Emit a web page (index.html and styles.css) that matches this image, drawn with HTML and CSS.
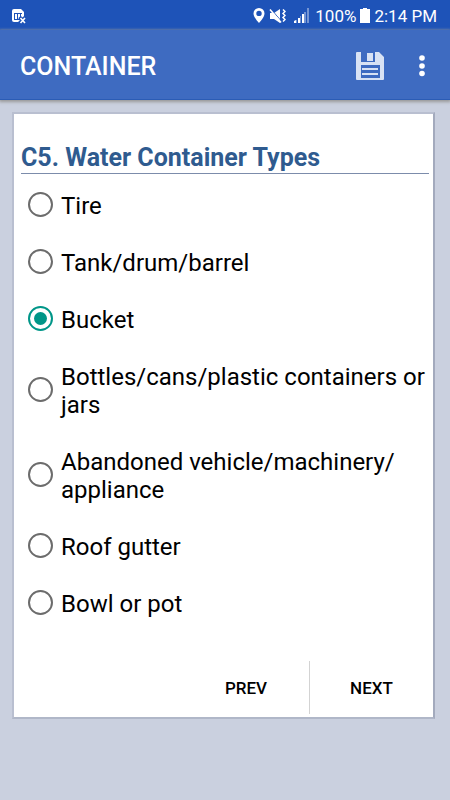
FILE: index.html
```
<!DOCTYPE html>
<html lang="en">
	<head>
		<meta charset="utf-8">
		<meta name="viewport" content="width=device-width, initial-scale=1">
		<title>Container</title>
		<link rel="stylesheet" href="styles.css">
	</head>
	<body>
		<div class="status_bar">
			<svg class="status_notice" width="15" height="16" viewBox="0 0 15 16">
				<path d="M2 1h7l3 3v10H2q-2 0-2-2V3q0-2 2-2z" fill="#fff"/>
				<path d="M2 5.500h8M2.500 5v7M2 11.500h6M5.500 6v5M8.500 6v3" fill="none" stroke="#1e53b8" stroke-width="1"/>
				<path d="M7.500 9l6 6M13.500 9l-6 6" stroke="#1e53b8" stroke-width="3.500"/>
				<path d="M8.500 10l4.500 5M13 10l-4.500 5" stroke="#fff" stroke-width="1.600"/>
			</svg>
			<div class="status_right">
				<svg width="12" height="16" viewBox="0 0 12 16">
					<path d="M6 0a5.500 5.500 0 0 0-5.500 5.500C.5 9.500 6 15 6 15s5.500-5.500 5.500-9.500A5.500 5.500 0 0 0 6 0zm0 2.700a2.700 2.700 0 1 1 0 5.400 2.700 2.700 0 0 1 0-5.400z" fill="#fff" fill-rule="evenodd"/>
				</svg>
				<svg width="17" height="16" viewBox="0 0 17 16">
					<path d="M1 5h4l6-4v14l-6-4H1z" fill="#fff"/>
					<path d="M2 1l11 13" stroke="#1e53b8" stroke-width="1"/>
					<path d="M1 1.500l11 13" stroke="#fff" stroke-width="1.600"/>
					<path d="M14 1.500l2 2-2 2 2 2-2 2 2 2-2 2" fill="none" stroke="#fff" stroke-width="1.500"/>
				</svg>
				<svg class="status_signal" width="16" height="16" viewBox="0 0 16 16">
					<path d="M0 15v-2l2-1v3zM4 15v-5h2v5zM8 15V6h2v9z" fill="#fff"/>
					<path d="M2 15v-3h1v3zM6 15V8h1v7zM10 15V4h2v11zM13 15V0h2v15z" fill="#7595d3"/>
				</svg>
				<span>100%</span>
				<svg width="10" height="16" viewBox="0 0 10 16">
					<path d="M3 0h4v1h3v14H0V1h3z" fill="#fff"/>
				</svg>
				<span>2:14 PM</span>
			</div>
		</div>

		<header class="app_bar">
			<h1>CONTAINER</h1>
			<button type="button" class="icon_button" aria-label="Save">
				<svg width="28" height="28" viewBox="0 0 28 28">
					<path d="M1 0h4v10h14V0h4l5 5v22q0 1-1 1H1q-1 0-1-1V1q0-1 1-1z" fill="#d8e2f4"/>
					<path d="M11 1h6v8h-6z" fill="#d8e2f4"/>
					<path d="M5 13h19v13H5z" fill="#3e6bc1"/>
					<path d="M6 17h16M6 22h16" stroke="#d8e2f4" stroke-width="2"/>
				</svg>
			</button>
			<button type="button" class="icon_button menu_button" aria-label="More options">
				<svg width="6" height="22" viewBox="0 0 6 22">
					<circle cx="3" cy="3" r="2.800" fill="#fff"/>
					<circle cx="3" cy="11" r="2.800" fill="#fff"/>
					<circle cx="3" cy="18.500" r="2.800" fill="#fff"/>
				</svg>
			</button>
		</header>

		<form class="card">
			<fieldset class="question">
				<legend>C5. Water Container Types</legend>
				<label class="option"><input type="radio" name="container_type" value="tire"><span>Tire</span></label>
				<label class="option"><input type="radio" name="container_type" value="tank"><span>Tank/drum/barrel</span></label>
				<label class="option"><input type="radio" name="container_type" value="bucket" checked><span>Bucket</span></label>
				<label class="option"><input type="radio" name="container_type" value="bottles"><span>Bottles/cans/plastic containers or jars</span></label>
				<label class="option"><input type="radio" name="container_type" value="vehicle"><span>Abandoned vehicle/machinery/<wbr>appliance</span></label>
				<label class="option"><input type="radio" name="container_type" value="gutter"><span>Roof gutter</span></label>
				<label class="option"><input type="radio" name="container_type" value="bowl"><span>Bowl or pot</span></label>
			</fieldset>
			<div class="card_buttons">
				<button type="button">PREV</button>
				<button type="button">NEXT</button>
			</div>
		</form>
	</body>
</html>
```

FILE: styles.css
```
*{
	box-sizing:border-box;
	margin:0;
	padding:0;
}

body{
	font-family:Roboto, sans-serif;
	background-color:#CAD0DF;
	color:#000;
}

button{
	border:0;
	background:none;
	font-family:inherit;
	cursor:pointer;
}

svg{
	display:block;
}

.status_bar{
	display:flex;
	align-items:center;
	justify-content:space-between;
	height:30px;
	padding:1px 13px 0 12px;
	background-color:#1E53B8;
	color:#FFF;
	font-size:17px;
}

.status_right{
	display:flex;
	align-items:center;
	gap:4px;
}

.status_signal{
	margin:0 1px 0 4px;
}

.app_bar{
	display:flex;
	align-items:center;
	height:70px;
	padding:3px 20px 0 20px;
	background-color:#3E6BC1;
	border-bottom:1px solid #2B5CB5;
	box-shadow:0 1px 3px 1px #999;
	color:#FFF;
}

.app_bar h1{
	flex:1;
	font-size:25px;
	font-weight:500;
}

.icon_button{
	padding:4px;
}

.menu_button{
	margin-left:26px;
	padding:4px 5px;
}

.card{
	margin:12px 15px 0 12px;
	padding:28px 0 3px;
	background-color:#FFF;
	border:2px solid #B9BFD0;
	border-right-color:#A3AABD;
	border-bottom-color:#B0B7C8;
}

.question{
	padding:0 4px 0 7px;
	border:0;
}

.question legend{
	width:100%;
	margin-bottom:3px;
	border-bottom:1px solid #7C8CAB;
	color:#2F5B8F;
	font-size:25px;
	font-weight:bold;
	line-height:31px;
}

.option{
	display:flex;
	align-items:center;
	gap:8px;
	padding:15px 0 14px 7px;
	font-size:24px;
	line-height:28px;
}

.option input{
	flex:none;
	display:grid;
	place-items:center;
	width:25px;
	height:25px;
	margin-bottom:3px;
	appearance:none;
	border:2px solid #6C6C6C;
	border-radius:50%;
}

.option input:checked{
	border-color:#009688;
}

.option input:checked::before{
	content:"";
	width:13px;
	height:13px;
	border-radius:50%;
	background-color:#009688;
}

.card_buttons{
	display:flex;
	justify-content:flex-end;
	margin-top:29px;
}

.card_buttons button{
	width:126px;
	height:53px;
	font-size:17px;
	font-weight:500;
}

.card_buttons button + button{
	width:124px;
	border-left:1px solid #D3D3D3;
}
```
